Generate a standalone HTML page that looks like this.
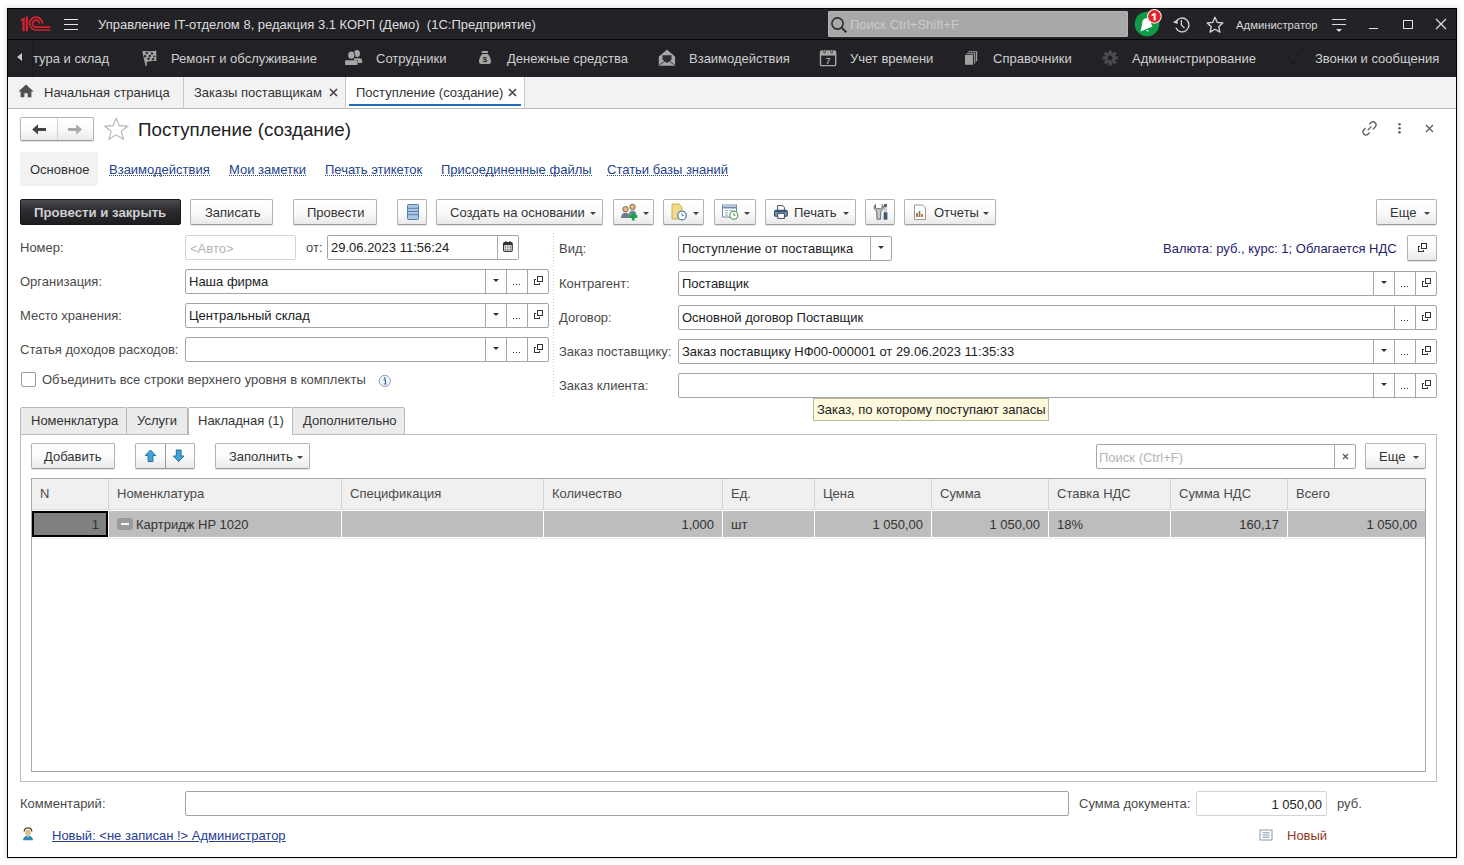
<!DOCTYPE html>
<html><head><meta charset="utf-8">
<style>
*{box-sizing:border-box;margin:0;padding:0}
html,body{width:1464px;height:865px;overflow:hidden;background:#fff}
body{position:relative;font-family:"Liberation Sans",sans-serif;font-size:13px;color:#333}
.a{position:absolute}
.t{position:absolute;white-space:nowrap;line-height:15px;height:15px}
.win{position:absolute;left:7px;top:8px;width:1450px;height:850px;border:1px solid #000;background:#fff;box-shadow:0 0 5px 1px rgba(0,0,0,.12)}
.mt{color:#cfcfcf}
.btn{position:absolute;height:26px;border:1px solid #b4b4b4;border-bottom-color:#9a9a9a;border-radius:2px;background:linear-gradient(#ffffff 0%,#fbfbfb 50%,#e9e9e9 100%);box-shadow:0 1px 1px rgba(0,0,0,.12)}
.btn .bt{position:absolute;top:5px;white-space:nowrap;line-height:15px;color:#333}
.dd{position:absolute;width:0;height:0;border-left:3px solid transparent;border-right:3px solid transparent;border-top:3px solid #444}
.inp{position:absolute;height:24px;border:1px solid #a5a5a5;border-radius:2px;background:#fff}
.inp.l{border-color:#d4d4d4}
.inp .v{position:absolute;left:4px;top:3px;white-space:nowrap;line-height:15px;color:#222}
.sep{position:absolute;top:0;bottom:0;width:1px;background:#c4c4c4}
.lbl{color:#4a4a4a}
.ib{position:absolute;top:0;width:21px;height:23px;border-left:1px solid #a5a5a5}
.ib.dr::after{content:"";position:absolute;left:7px;top:9px;border-left:3px solid transparent;border-right:3px solid transparent;border-top:3.5px solid #333}
.ib.el::after{content:"";position:absolute;left:6px;top:14px;width:1px;height:1px;background:#333;box-shadow:3px 0 #333,6px 0 #333}
.ib.op::before{content:"";position:absolute;left:6px;top:9px;width:6px;height:6px;border:1px solid #333;box-sizing:border-box}
.ib.op::after{content:"";position:absolute;left:9px;top:6px;width:6px;height:6px;border:1px solid #333;background:#fff;box-sizing:border-box;box-shadow:0 0 0 1px #fff}
.lnk{color:#24438a;border-bottom:1px dotted #34466e;line-height:15px;height:14px}
</style></head><body>
<div class="win"></div>

<!-- TITLE BAR -->
<div class="a" style="left:8px;top:9px;width:1448px;height:30px;background:#232327"></div>
<div class="a" style="left:8px;top:39px;width:1448px;height:1px;background:#060608"></div>
<svg class="a" style="left:18px;top:13px" width="36" height="22" viewBox="18 13 36 22">
 <g fill="#d6222c">
  <path d="M25.8 16.6h2.2v14.6h-2.2z"/>
  <path d="M22.4 31.2V20.5l-1.6 .9v-1.9l3.9-2.6v14.3z"/>
 </g>
 <g fill="none" stroke="#d6222c" stroke-width="1.7">
  <path d="M42.4 23.6A6.4 6.4 0 1 0 36 30H50.2"/>
  <path d="M39.5 23.6A3.5 3.5 0 1 0 36 27.1H50.2"/>
 </g>
</svg>
<div class="a" style="left:64px;top:19px;width:14px;height:1px;background:#e6e6e6;box-shadow:0 5px 0 #e6e6e6,0 10px 0 #e6e6e6"></div>
<div class="t" style="left:98px;top:17px;color:#dedede">Управление IT-отделом 8, редакция 3.1 КОРП (Демо)&nbsp;&nbsp;(1С:Предприятие)</div>

<div class="a" style="left:828px;top:11px;width:300px;height:26px;background:#a8a8a8;border-radius:2px;box-shadow:inset 0 0 0 1px #b4b4b4"></div>
<svg class="a" style="left:830px;top:16px" width="18" height="18" viewBox="0 0 18 18"><circle cx="7.5" cy="7.5" r="5.6" fill="none" stroke="#2c2c2c" stroke-width="1.6"/><path d="M11.6 11.6l4.6 4.6" stroke="#2c2c2c" stroke-width="2"/></svg>
<div class="t" style="left:850px;top:17px;color:#cbcbcb">Поиск Ctrl+Shift+F</div>

<svg class="a" style="left:1132px;top:8px" width="34" height="32" viewBox="1132 8 34 32">
 <circle cx="1147" cy="24" r="12.3" fill="#0e9a47"/>
 <path d="M1140.5 31.5 L1152.5 26.5 C1151 24 1151 21 1149.5 19.5 C1147.5 17.5 1145 18 1143.5 19.5 C1141.5 21.5 1142.5 24 1141.5 27 Z" fill="#fff"/>
 <path d="M1145.5 31 l2.5 -1.2 l0.8 1.8 z" fill="#fff"/>
 <circle cx="1154.4" cy="16.4" r="7.3" fill="#fff"/>
 <circle cx="1154.4" cy="16.4" r="6.3" fill="#e3232b"/>
 <path d="M1153.6 20.6V15.2l-2 1.1v-1.8l2.3-1.4h1.7v7.5z" fill="#fff"/>
</svg>
<svg class="a" style="left:1172px;top:14px" width="22" height="22" viewBox="1172 14 22 22">
 <path d="M1176 21.6 A6.9 6.9 0 1 1 1175.8 27.8" fill="none" stroke="#d8d8d8" stroke-width="1.3"/>
 <path d="M1172.8 22.3 l4.6-2.6 l.2 4.4z" fill="#d8d8d8"/>
 <path d="M1181.4 20v5l3.1 3.1" fill="none" stroke="#d8d8d8" stroke-width="1.2"/>
</svg>
<svg class="a" style="left:1205px;top:15px" width="20" height="20" viewBox="0 0 20 20">
 <path d="M10 2.3l2.3 5.1 5.5.6-4.1 3.7 1.2 5.4L10 14.3l-4.9 2.8 1.2-5.4L2.2 8l5.5-.6z" fill="none" stroke="#d8d8d8" stroke-width="1.3" stroke-linejoin="round"/>
</svg>
<div class="t" style="left:1236px;top:18px;font-size:11.3px;color:#d6d6d6">Администратор</div>
<svg class="a" style="left:1330px;top:17px" width="18" height="16" viewBox="1330 17 18 16">
 <path d="M1332 19.5h14M1332 24.5h14" stroke="#dcdcdc" stroke-width="1.2"/>
 <path d="M1336 29h6l-3 3z" fill="#dcdcdc"/>
</svg>
<div class="a" style="left:1369px;top:28px;width:9px;height:1px;background:#e0e0e0"></div>
<div class="a" style="left:1403px;top:20px;width:10px;height:9px;border:1px solid #e0e0e0"></div>
<svg class="a" style="left:1434px;top:17px" width="14" height="14" viewBox="0 0 14 14"><path d="M2 2l10 10M12 2L2 12" stroke="#e0e0e0" stroke-width="1.2"/></svg>

<!-- MENU BAR -->
<div class="a" style="left:8px;top:40px;width:1448px;height:37px;background:#222226"></div>
<div class="a" style="left:32px;top:40px;width:1px;height:37px;background:#1b1b1e"></div>
<div class="a" style="left:17px;top:53px;width:0;height:0;border-top:4.5px solid transparent;border-bottom:4.5px solid transparent;border-right:5.5px solid #c8c8c8"></div>
<div class="t mt" style="left:33px;top:51px">тура и склад</div>
<div class="t mt" style="left:171px;top:51px">Ремонт и обслуживание</div>
<div class="t mt" style="left:376px;top:51px">Сотрудники</div>
<div class="t mt" style="left:507px;top:51px">Денежные средства</div>
<div class="t mt" style="left:689px;top:51px">Взаимодействия</div>
<div class="t mt" style="left:850px;top:51px">Учет времени</div>
<div class="t mt" style="left:993px;top:51px">Справочники</div>
<div class="t mt" style="left:1132px;top:51px">Администрирование</div>
<div class="t mt" style="left:1315px;top:51px">Звонки и сообщения</div>
<svg class="a" style="left:0;top:40px" width="1464" height="37" viewBox="0 40 1464 37">
 <!-- flag -->
 <path d="M142.2 51.5 C145 50.5 147.5 51.5 150 51.2 C152.5 51 154.5 50.8 156.3 50.8 V61 C153.5 61.2 151 61 148.5 61.4 C147 61.6 146 62 146.8 62.5 L146.8 66 L145.6 66 Z" fill="#a4a4a4"/>
 <g fill="#2a2a2e"><circle cx="146.7" cy="53" r="1.2"/><circle cx="152" cy="53.6" r="1.2"/><circle cx="145" cy="56.3" r="1.2"/><circle cx="149.8" cy="56" r="1.2"/><circle cx="154.3" cy="56.5" r="1.1"/><circle cx="148.5" cy="58.8" r="1.2"/><circle cx="153" cy="59.3" r="1.2"/></g>
 <!-- users -->
 <g fill="#a6a6a6"><ellipse cx="357" cy="53.4" rx="3" ry="3.5"/><path d="M354 58.2h5.6c1.5 0 2.6 1 2.6 2.6V63h-8.2z"/></g>
 <g fill="#222226"><ellipse cx="351.3" cy="55.2" rx="4" ry="4.6"/><path d="M344.8 60.2h13v5.6h-13z"/></g>
 <g fill="#a6a6a6"><ellipse cx="351.3" cy="55.2" rx="3.1" ry="3.6"/><path d="M346 60.2h10.5c.8 0 1 .6 1 1.4V65h-12.4v-3.4c0-.8.3-1.4.9-1.4z"/></g>
 <!-- money bag -->
 <g fill="#a6a6a6"><rect x="481.8" y="51" width="6.2" height="2" rx=".4"/><path d="M482 54h6c1.5 2 3 4.8 3 7.6 0 1.5-.8 2.3-2 2.3h-8c-1.2 0-2-.8-2-2.3 0-2.8 1.5-5.6 3-7.6z"/></g>
 <text x="485" y="62.4" text-anchor="middle" font-family="Liberation Sans" font-weight="bold" font-size="8" fill="#2a2a2e">$</text>
 <!-- envelope -->
 <path d="M658.8 56.5 L667 49.8 L675.1 56.5 V65.8 H658.8 Z" fill="#a6a6a6"/>
 <path d="M662.5 55.2h9v4.6l-4.5 3.2-4.5-3.2z" fill="#2e2e32"/>
 <path d="M659.5 65 L667 59.5 L674.5 65" fill="none" stroke="#2e2e32" stroke-width=".9"/>
 <!-- calendar -->
 <rect x="820.5" y="51" width="15.2" height="14.6" rx="1.2" fill="none" stroke="#a6a6a6" stroke-width="1.4"/>
 <rect x="820.5" y="51" width="15.2" height="4.6" fill="#a6a6a6"/>
 <rect x="823.8" y="49.6" width="1.6" height="3.6" rx=".8" fill="#a6a6a6" stroke="#222226" stroke-width=".6"/>
 <rect x="830.8" y="49.6" width="1.6" height="3.6" rx=".8" fill="#a6a6a6" stroke="#222226" stroke-width=".6"/>
 <text x="828.2" y="64" text-anchor="middle" font-family="Liberation Sans" font-weight="bold" font-size="8.5" fill="#a6a6a6">7</text>
 <!-- copies -->
 <path d="M968.2 51.8h8.4v9.5" fill="none" stroke="#a6a6a6" stroke-width="1.1"/>
 <path d="M966.4 53.8h8.3v9.8" fill="none" stroke="#a6a6a6" stroke-width="1.1"/>
 <rect x="965" y="55" width="8" height="9.8" fill="#a0a0a0"/>
 <!-- gear -->
 <g transform="translate(1110.2 58)" fill="#4b4b4e">
  <circle r="5.2"/>
  <g id="tooth"><rect x="-1.6" y="-7.6" width="3.2" height="3.4"/></g>
  <rect x="-1.6" y="-7.6" width="3.2" height="3.4" transform="rotate(45)"/>
  <rect x="-1.6" y="-7.6" width="3.2" height="3.4" transform="rotate(90)"/>
  <rect x="-1.6" y="-7.6" width="3.2" height="3.4" transform="rotate(135)"/>
  <rect x="-1.6" y="-7.6" width="3.2" height="3.4" transform="rotate(180)"/>
  <rect x="-1.6" y="-7.6" width="3.2" height="3.4" transform="rotate(225)"/>
  <rect x="-1.6" y="-7.6" width="3.2" height="3.4" transform="rotate(270)"/>
  <rect x="-1.6" y="-7.6" width="3.2" height="3.4" transform="rotate(315)"/>
  <circle r="2.4" fill="#222226"/>
 </g>
 <!-- phone (very dark) -->
 <path d="M1287 56.5c1 3.5 3.5 6.5 7 8.5l2-1.5-2.5-2.5-1.5 1c-1.5-1-2.5-2.2-3.2-3.6l1-1.5-2.5-2.4z" fill="#1c1c1f"/>
 <path d="M1295 52.5l2.8 2.5 3.5-4" fill="none" stroke="#1c1c1f" stroke-width="1.4"/>
</svg>

<!-- OPEN TABS BAR -->
<div class="a" style="left:8px;top:77px;width:1448px;height:31px;background:#f2f2f2"></div>
<div class="a" style="left:8px;top:108px;width:1448px;height:1px;background:#bcbcbc"></div>
<div class="a" style="left:183px;top:77px;width:1px;height:31px;background:#c9c9c9"></div>
<div class="a" style="left:345px;top:77px;width:1px;height:31px;background:#c9c9c9"></div>
<div class="a" style="left:346px;top:77px;width:178px;height:31px;background:#fff"></div>
<div class="a" style="left:524px;top:77px;width:1px;height:31px;background:#c9c9c9"></div>
<div class="a" style="left:349px;top:104px;width:172px;height:2px;background:#1e6fbf"></div>
<svg class="a" style="left:18px;top:84px" width="16" height="14" viewBox="0 0 16 14"><path d="M8 .6L.4 7.4h2.2v5.8h3.8V9.2h3.2v4h3.8V7.4h2.2z" fill="#505050"/></svg>
<div class="t" style="left:44px;top:85px;color:#333">Начальная страница</div>
<div class="t" style="left:194px;top:85px;color:#333">Заказы поставщикам</div>
<svg class="a" style="left:329px;top:88px" width="9" height="9" viewBox="0 0 9 9"><path d="M1 1l7 7M8 1L1 8" stroke="#444" stroke-width="1.6"/></svg>
<div class="t" style="left:356px;top:85px;color:#333">Поступление (создание)</div>
<svg class="a" style="left:508px;top:88px" width="9" height="9" viewBox="0 0 9 9"><path d="M1 1l7 7M8 1L1 8" stroke="#444" stroke-width="1.6"/></svg>

<!-- FORM HEADER -->
<div class="btn" style="left:20px;top:117px;width:74px;height:24px"></div>
<div class="a" style="left:57px;top:118px;width:1px;height:22px;background:#d0d0d0"></div>
<svg class="a" style="left:30px;top:122px" width="56" height="16" viewBox="30 122 56 16">
 <path d="M32.2 129.4 L38 124.3 V127.9 H46 V130.9 H38 V134.5 Z" fill="#444"/>
 <path d="M82 129.4 L76.2 124.3 V127.9 H68 V130.9 H76.2 V134.5 Z" fill="#a8a8a8"/>
</svg>
<svg class="a" style="left:102px;top:116px" width="28" height="26" viewBox="102 116 28 26">
 <path d="M116.2 118.3 L119.3 125.6 L127.7 126.1 L121.3 131.3 L123.4 139.3 L116.2 134.9 L109 139.3 L111.1 131.3 L104.7 126.1 L113.1 125.6 Z" fill="none" stroke="#b4b4b4" stroke-width="1.1" stroke-linejoin="miter"/>
</svg>
<div class="t" style="left:138px;top:119px;font-size:18.8px;line-height:22px;height:22px;color:#222">Поступление (создание)</div>
<svg class="a" style="left:1358px;top:116px" width="84" height="24" viewBox="1358 116 84 24">
 <g fill="none" stroke="#555" stroke-width="1.2">
  <g transform="translate(1369.5 128.4) rotate(-45) scale(.87)" stroke-width="1.35"><path d="M3.2 -3.5H5.65A3.5 3.5 0 0 1 5.65 3.5H1.8M-2.6 -3.5H-5.65A3.5 3.5 0 0 0 -5.65 3.5H-3.2M-3 0H3"/></g>
 </g>
 <g fill="#666"><circle cx="1399.5" cy="124.3" r="1.3"/><circle cx="1399.5" cy="128.3" r="1.3"/><circle cx="1399.5" cy="132.4" r="1.3"/></g>
 <path d="M1426 125l7 7M1433 125l-7 7" stroke="#555" stroke-width="1.2"/>
</svg>

<!-- form nav -->
<div class="a" style="left:20px;top:152px;width:78px;height:34px;background:#f2f2f2;border-radius:3px"></div>
<div class="t" style="left:30px;top:162px;color:#333">Основное</div>
<div class="t lnk" style="left:109px;top:162px">Взаимодействия</div>
<div class="t lnk" style="left:229px;top:162px">Мои заметки</div>
<div class="t lnk" style="left:325px;top:162px">Печать этикеток</div>
<div class="t lnk" style="left:441px;top:162px">Присоединенные файлы</div>
<div class="t lnk" style="left:607px;top:162px">Статьи базы знаний</div>

<!-- command bar -->
<div class="a" style="left:20px;top:199px;width:161px;height:26px;border-radius:2px;background:linear-gradient(#4a4a4f,#2c2c30 45%,#1d1d20);border:1px solid #18181a"></div>
<div class="t" style="left:34px;top:205px;font-size:13.2px;font-weight:bold;color:#cfcfcf">Провести и закрыть</div>
<div class="btn" style="left:190px;top:199px;width:83px"><span class="bt" style="left:14px">Записать</span></div>
<div class="btn" style="left:293px;top:199px;width:84px"><span class="bt" style="left:13px">Провести</span></div>
<div class="btn" style="left:397px;top:199px;width:30px">
 <svg class="a" style="left:8px;top:3px" width="14" height="18" viewBox="0 0 14 18"><rect x="1.5" y="1.5" width="11" height="15" rx="1" fill="#a9c6e4" stroke="#5b7fa8" stroke-width="1"/><path d="M2 5.3h10M2 8.5h10M2 11.7h10" stroke="#5b7fa8" stroke-width="1"/></svg>
</div>
<div class="btn" style="left:436px;top:199px;width:167px"><span class="bt" style="left:13px">Создать на основании</span><i class="dd" style="left:153px;top:12px"></i></div>
<div class="btn" style="left:613px;top:199px;width:41px">
 <svg class="a" style="left:5px;top:3px" width="20" height="18" viewBox="0 0 20 18">
  <circle cx="13.5" cy="4" r="2.7" fill="#e4b985" stroke="#6a4a2a" stroke-width=".8"/><path d="M9.5 12c0-3 1.8-4.6 4-4.6s4 1.6 4 4.6z" fill="#7a8a9a"/>
  <circle cx="6.5" cy="6.2" r="2.7" fill="#e4b985" stroke="#6a4a2a" stroke-width=".8"/><path d="M2 15c0-3.5 2-5.2 4.5-5.2s4.5 1.7 4.5 5.2z" fill="#6d7c8c"/>
  <path d="M14.2 9.5v8M10.2 13.5h8" stroke="#1aa34a" stroke-width="2.8"/>
 </svg>
 <i class="dd" style="left:29px;top:12px"></i>
</div>
<div class="btn" style="left:663px;top:199px;width:41px">
 <svg class="a" style="left:6px;top:3px" width="20" height="18" viewBox="0 0 20 18">
  <path d="M2 1h7l3 3v12H2z" fill="#f3d98a" stroke="#c9a64a" stroke-width=".9"/>
  <circle cx="12" cy="12.5" r="4.3" fill="#fff" stroke="#5b7fa8" stroke-width="1.3"/><path d="M12 10.3v2.4h2" fill="none" stroke="#5b7fa8" stroke-width="1"/>
 </svg>
 <i class="dd" style="left:29px;top:12px"></i>
</div>
<div class="btn" style="left:714px;top:199px;width:42px">
 <svg class="a" style="left:6px;top:3px" width="20" height="18" viewBox="0 0 20 18">
  <rect x="1.5" y="2" width="14" height="12" fill="#fff" stroke="#6f8fb0" stroke-width="1"/><path d="M1.5 4.5h14" stroke="#6f8fb0" stroke-width="2"/>
  <path d="M4 7.5h3M8.5 7.5h3M4 10h3M4 12.2h3" stroke="#9ab" stroke-width="1"/>
  <circle cx="12.8" cy="12.2" r="4" fill="#fff" stroke="#5aa060" stroke-width="1.2"/><path d="M12.8 10v2.3h1.8" fill="none" stroke="#5aa060" stroke-width="1"/>
 </svg>
 <i class="dd" style="left:29px;top:12px"></i>
</div>
<div class="btn" style="left:765px;top:199px;width:91px">
 <svg class="a" style="left:6px;top:4px" width="18" height="18" viewBox="771 204 18 18">
  <path d="M776.6 210.5V205.6h5.2l1.6 1.7v3.2" fill="#fff" stroke="#3a4e64" stroke-width="1"/>
  <rect x="773.6" y="210.3" width="12.7" height="6" rx="1.3" fill="#7f9ab6" stroke="#2c4560" stroke-width="1.1"/>
  <path d="M774.6 211.6h10.6" stroke="#2c4560" stroke-width="1"/>
  <rect x="776.8" y="213.4" width="6.6" height="5" fill="#fff" stroke="#3a4e64" stroke-width="1"/>
 </svg>
 <span class="bt" style="left:28px">Печать</span><i class="dd" style="left:77px;top:12px"></i>
</div>
<div class="btn" style="left:865px;top:199px;width:30px">
 <svg class="a" style="left:6px;top:3px" width="18" height="18" viewBox="871 203 18 18">
  <path d="M874.5 204.6c-1.6 1.2-1.8 3.6-.6 5.1l1.8 1.2l.3 8.3h3.6l.3-8.3l1.8-1.2c1.2-1.5 1-3.9-.6-5.1v3.2l-1.4.9h-3.8l-1.4-.9z" fill="#c9c9c9" stroke="#5a5a5a" stroke-width=".9"/>
  <rect x="883.1" y="204" width="2.8" height="3.2" fill="#555"/>
  <rect x="883.5" y="207" width="2" height="5" fill="#d8dde2" stroke="#9aa" stroke-width=".5"/>
  <path d="M882.6 212.3h3.8v7.4h-3.8z" fill="#3e5a78"/>
 </svg>
</div>
<div class="btn" style="left:904px;top:199px;width:92px">
 <svg class="a" style="left:8px;top:4px" width="14" height="17" viewBox="0 0 14 17">
  <path d="M1.5 1h8l3 3v11.5h-11z" fill="#fff" stroke="#9a9a9a" stroke-width="1"/>
  <path d="M4 13V9" stroke="#d63a2a" stroke-width="1.6"/><path d="M6.5 13V7" stroke="#3aa04a" stroke-width="1.6"/><path d="M9 13V10" stroke="#d63a2a" stroke-width="1.6"/>
 </svg>
 <span class="bt" style="left:29px">Отчеты</span><i class="dd" style="left:78px;top:12px"></i>
</div>
<div class="btn" style="left:1376px;top:199px;width:61px"><span class="bt" style="left:13px">Еще</span><i class="dd" style="left:47px;top:12px"></i></div>
<!-- LEFT FIELDS -->
<div class="t lbl" style="left:20px;top:240px">Номер:</div>
<div class="inp l" style="left:185px;top:235px;width:111px;height:25px"><span class="v" style="color:#b4b4b4;top:5px">&lt;Авто&gt;</span></div>
<div class="t lbl" style="left:306px;top:240px">от:</div>
<div class="inp" style="left:327px;top:235px;width:192px;height:25px"><span class="v" style="left:3px;top:4px">29.06.2023 11:56:24</span>
 <div class="ib" style="left:169px;width:21px">
  <svg class="a" style="left:5px;top:5px" width="10" height="11" viewBox="0 0 10 11"><rect x=".6" y="1.6" width="8.6" height="8.8" rx="1.2" fill="#fff" stroke="#333" stroke-width="1.2"/><rect x=".6" y="1.6" width="8.6" height="2.6" fill="#333"/><rect x="2.2" y=".2" width="1.3" height="2" fill="#333"/><rect x="6.3" y=".2" width="1.3" height="2" fill="#333"/><g fill="#333"><circle cx="2.7" cy="6" r=".7"/><circle cx="4.9" cy="6" r=".7"/><circle cx="7.1" cy="6" r=".7"/><circle cx="2.7" cy="8.2" r=".7"/><circle cx="4.9" cy="8.2" r=".7"/><circle cx="7.1" cy="8.2" r=".7"/></g></svg>
 </div>
</div>

<div class="t lbl" style="left:20px;top:274px">Организация:</div>
<div class="inp" style="left:185px;top:269px;width:364px;height:25px"><span class="v" style="left:3px;top:4px">Наша фирма</span>
 <div class="ib dr" style="left:299px"></div><div class="ib el" style="left:320px"></div><div class="ib op" style="left:341px"></div>
</div>
<div class="t lbl" style="left:20px;top:308px">Место хранения:</div>
<div class="inp" style="left:185px;top:303px;width:364px;height:25px"><span class="v" style="left:3px;top:4px">Центральный склад</span>
 <div class="ib dr" style="left:299px"></div><div class="ib el" style="left:320px"></div><div class="ib op" style="left:341px"></div>
</div>
<div class="t lbl" style="left:20px;top:342px">Статья доходов расходов:</div>
<div class="inp" style="left:185px;top:337px;width:364px;height:25px">
 <div class="ib dr" style="left:299px"></div><div class="ib el" style="left:320px"></div><div class="ib op" style="left:341px"></div>
</div>
<div class="a" style="left:21px;top:372px;width:15px;height:15px;border:1px solid #9a9a9a;border-radius:2px;background:#fff"></div>
<div class="t lbl" style="left:42px;top:372px">Объединить все строки верхнего уровня в комплекты</div>
<svg class="a" style="left:378px;top:374px" width="14" height="14" viewBox="0 0 14 14"><circle cx="6.8" cy="6.9" r="5.6" fill="#f4f7fb" stroke="#8aa0b8" stroke-width="1"/><circle cx="6.8" cy="4.2" r=".9" fill="#3f6a9a"/><path d="M5.6 6.1h1.9v3.9h1.1M5.6 10h2" fill="none" stroke="#3f6a9a" stroke-width="1.2"/></svg>

<div class="a" style="left:553px;top:233px;width:1px;height:165px;background-image:linear-gradient(#d0d0d0 50%,transparent 50%);background-size:1px 3px"></div>

<!-- RIGHT FIELDS -->
<div class="t lbl" style="left:559px;top:241px">Вид:</div>
<div class="inp" style="left:678px;top:236px;width:214px;height:25px"><span class="v" style="left:3px;top:4px">Поступление от поставщика</span>
 <div class="ib dr" style="left:191px"></div>
</div>
<div class="t" style="left:1163px;top:241px;color:#1f236e">Валюта: руб., курс: 1; Облагается НДС</div>
<div class="btn" style="left:1407px;top:235px;width:30px;height:26px">
 <div class="a" style="left:10px;top:10px;width:6px;height:6px;border:1px solid #333"></div>
 <div class="a" style="left:13px;top:7px;width:6px;height:6px;border:1px solid #333;background:#fafafa;box-shadow:0 0 0 1px #fafafa"></div>
</div>

<div class="t lbl" style="left:559px;top:276px">Контрагент:</div>
<div class="inp" style="left:678px;top:271px;width:759px;height:25px"><span class="v" style="left:3px;top:4px">Поставщик</span>
 <div class="ib dr" style="left:694px"></div><div class="ib el" style="left:715px"></div><div class="ib op" style="left:736px"></div>
</div>
<div class="t lbl" style="left:559px;top:310px">Договор:</div>
<div class="inp" style="left:678px;top:305px;width:759px;height:25px"><span class="v" style="left:3px;top:4px">Основной договор Поставщик</span>
 <div class="ib el" style="left:715px"></div><div class="ib op" style="left:736px"></div>
</div>
<div class="t lbl" style="left:559px;top:344px">Заказ поставщику:</div>
<div class="inp" style="left:678px;top:339px;width:759px;height:25px"><span class="v" style="left:3px;top:4px">Заказ поставщику НФ00-000001 от 29.06.2023 11:35:33</span>
 <div class="ib dr" style="left:694px"></div><div class="ib el" style="left:715px"></div><div class="ib op" style="left:736px"></div>
</div>
<div class="t lbl" style="left:559px;top:378px">Заказ клиента:</div>
<div class="inp" style="left:678px;top:373px;width:759px;height:25px">
 <div class="ib dr" style="left:694px"></div><div class="ib el" style="left:715px"></div><div class="ib op" style="left:736px"></div>
</div>
<!-- TOOLTIP -->
<div class="a" style="left:813px;top:398px;width:236px;height:23px;background:#fdf9dd;border:1px solid #bcb8a0"></div>
<div class="t" style="left:817px;top:402px;color:#222">Заказ, по которому поступают запасы</div>

<!-- PAGE TABS -->
<div class="a" style="left:20px;top:434px;width:1417px;height:348px;border:1px solid #bdbdbd"></div>
<div class="a" style="left:20px;top:407px;width:107px;height:28px;background:#ebebeb;border:1px solid #b8b8b8;border-radius:2px 2px 0 0"></div>
<div class="a" style="left:126px;top:407px;width:62px;height:28px;background:#ebebeb;border:1px solid #b8b8b8;border-radius:2px 2px 0 0"></div>
<div class="a" style="left:292px;top:407px;width:113px;height:28px;background:#ebebeb;border:1px solid #b8b8b8;border-radius:2px 2px 0 0"></div>
<div class="a" style="left:188px;top:407px;width:105px;height:28px;background:#fff;border:1px solid #b8b8b8;border-bottom:none;border-radius:2px 2px 0 0"></div>
<div class="t" style="left:31px;top:413px;color:#333">Номенклатура</div>
<div class="t" style="left:137px;top:413px;color:#333">Услуги</div>
<div class="t" style="left:198px;top:413px;color:#333">Накладная (1)</div>
<div class="t" style="left:303px;top:413px;color:#333">Дополнительно</div>

<!-- table toolbar -->
<div class="btn" style="left:31px;top:443px;width:84px"><span class="bt" style="left:12px">Добавить</span></div>
<div class="btn" style="left:135px;top:443px;width:60px">
 <div class="a" style="left:29px;top:0;width:1px;height:24px;background:#9a9a9a"></div>
 <svg class="a" style="left:6px;top:4px" width="48" height="16" viewBox="0 0 48 16">
  <path d="M8.5 2 L13.8 7.6 H10.9 V13.6 H6.1 V7.6 H3.2 Z" fill="#3ba7de" stroke="#2c6a8c" stroke-width="1"/>
  <path d="M36.7 13.6 L42 8 H39.1 V2 H34.3 V8 H31.4 Z" fill="#3ba7de" stroke="#2c6a8c" stroke-width="1"/>
 </svg>
</div>
<div class="btn" style="left:215px;top:443px;width:95px"><span class="bt" style="left:13px">Заполнить</span><i class="dd" style="left:81px;top:12px"></i></div>
<div class="inp" style="left:1096px;top:444px;width:260px;height:25px"><span class="v" style="left:2px;top:5px;color:#b4b4b4">Поиск (Ctrl+F)</span>
 <div class="ib" style="left:237px"><svg class="a" style="left:6px;top:7px" width="9" height="9" viewBox="0 0 9 9"><path d="M2 2l5 5M7 2l-5 5" stroke="#555" stroke-width="1.2"/></svg></div>
</div>
<div class="btn" style="left:1365px;top:443px;width:61px"><span class="bt" style="left:13px">Еще</span><i class="dd" style="left:47px;top:12px"></i></div>

<!-- TABLE -->
<div class="a" style="left:31px;top:478px;width:1395px;height:294px;border:1px solid #a8a8a8;background:#fff"></div>
<div class="a" style="left:32px;top:479px;width:1393px;height:30px;background:#f0f0f0"></div>
<div class="a" style="left:32px;top:509px;width:1393px;height:1px;background:#dedede"></div>
<div class="a" style="left:32px;top:511px;width:1393px;height:26px;background:#bdbdbd"></div>
<div class="a" style="left:32px;top:538px;width:1393px;height:1px;background:#ececec"></div>
<div class="a" style="left:108px;top:479px;width:1px;height:30px;background:#d4d4d4"></div><div class="a" style="left:108px;top:511px;width:1px;height:26px;background:#fff"></div><div class="a" style="left:341px;top:479px;width:1px;height:30px;background:#d4d4d4"></div><div class="a" style="left:341px;top:511px;width:1px;height:26px;background:#fff"></div><div class="a" style="left:543px;top:479px;width:1px;height:30px;background:#d4d4d4"></div><div class="a" style="left:543px;top:511px;width:1px;height:26px;background:#fff"></div><div class="a" style="left:722px;top:479px;width:1px;height:30px;background:#d4d4d4"></div><div class="a" style="left:722px;top:511px;width:1px;height:26px;background:#fff"></div><div class="a" style="left:814px;top:479px;width:1px;height:30px;background:#d4d4d4"></div><div class="a" style="left:814px;top:511px;width:1px;height:26px;background:#fff"></div><div class="a" style="left:931px;top:479px;width:1px;height:30px;background:#d4d4d4"></div><div class="a" style="left:931px;top:511px;width:1px;height:26px;background:#fff"></div><div class="a" style="left:1048px;top:479px;width:1px;height:30px;background:#d4d4d4"></div><div class="a" style="left:1048px;top:511px;width:1px;height:26px;background:#fff"></div><div class="a" style="left:1170px;top:479px;width:1px;height:30px;background:#d4d4d4"></div><div class="a" style="left:1170px;top:511px;width:1px;height:26px;background:#fff"></div><div class="a" style="left:1287px;top:479px;width:1px;height:30px;background:#d4d4d4"></div><div class="a" style="left:1287px;top:511px;width:1px;height:26px;background:#fff"></div>
<div class="a" style="left:32px;top:511px;width:76px;height:26px;background:#808080;border:2px solid #000"></div>
<div class="t" style="left:40px;top:486px;color:#4a4a4a">N</div>
<div class="t" style="left:117px;top:486px;color:#4a4a4a">Номенклатура</div>
<div class="t" style="left:350px;top:486px;color:#4a4a4a">Спецификация</div>
<div class="t" style="left:552px;top:486px;color:#4a4a4a">Количество</div>
<div class="t" style="left:731px;top:486px;color:#4a4a4a">Ед.</div>
<div class="t" style="left:823px;top:486px;color:#4a4a4a">Цена</div>
<div class="t" style="left:940px;top:486px;color:#4a4a4a">Сумма</div>
<div class="t" style="left:1057px;top:486px;color:#4a4a4a">Ставка НДС</div>
<div class="t" style="left:1179px;top:486px;color:#4a4a4a">Сумма НДС</div>
<div class="t" style="left:1296px;top:486px;color:#4a4a4a">Всего</div>

<div class="t" style="left:40px;width:59px;text-align:right;top:517px;color:#333">1</div>
<div class="a" style="left:117px;top:518px;width:16px;height:12px;border-radius:3px;background:#9a9a9a"></div>
<div class="a" style="left:121px;top:523px;width:8px;height:2px;background:#f4f4f4"></div>
<div class="t" style="left:136px;top:517px;color:#333">Картридж HP 1020</div>
<div class="t" style="left:600px;width:114px;text-align:right;top:517px;color:#333">1,000</div>
<div class="t" style="left:731px;top:517px;color:#333">шт</div>
<div class="t" style="left:820px;width:103px;text-align:right;top:517px;color:#333">1 050,00</div>
<div class="t" style="left:940px;width:100px;text-align:right;top:517px;color:#333">1 050,00</div>
<div class="t" style="left:1057px;top:517px;color:#333">18%</div>
<div class="t" style="left:1180px;width:99px;text-align:right;top:517px;color:#333">160,17</div>
<div class="t" style="left:1300px;width:117px;text-align:right;top:517px;color:#333">1 050,00</div>

<!-- BOTTOM -->
<div class="t lbl" style="left:20px;top:796px">Комментарий:</div>
<div class="inp" style="left:185px;top:791px;width:884px;height:25px"></div>
<div class="t lbl" style="left:1079px;top:796px">Сумма документа:</div>
<div class="inp l" style="left:1196px;top:791px;width:131px;height:25px"><span class="v" style="left:auto;right:4px;top:5px">1 050,00</span></div>
<div class="t lbl" style="left:1337px;top:796px">руб.</div>
<svg class="a" style="left:21px;top:826px" width="14" height="16" viewBox="0 0 14 16">
 <path d="M3.2 5.6c0-2.3 1.6-3.8 3.8-3.8s3.8 1.5 3.8 3.8" fill="none" stroke="#5a4020" stroke-width="1.3"/>
 <ellipse cx="7" cy="6.6" rx="2.8" ry="3.2" fill="#d9c08a"/>
 <path d="M2 14.2c0-2.8 2-4.4 5-4.4s5 1.6 5 4.4z" fill="#2f8cb0"/>
 <path d="M6.3 9.9h1.4l-.7 2.4z" fill="#e8f4fa"/>
</svg>
<div class="t" style="left:52px;top:828px;color:#26408f;text-decoration:underline">Новый: &lt;не записан !&gt; Администратор</div>
<svg class="a" style="left:1259px;top:829px" width="14" height="12" viewBox="0 0 14 12"><rect x="1" y="1" width="12" height="10" fill="#fff" stroke="#8a9aaa" stroke-width="1"/><path d="M3.5 3.8h7M3.5 6h7M3.5 8.2h7" stroke="#8a9aaa" stroke-width="1"/></svg>
<div class="t" style="left:1287px;top:828px;color:#8f3a22">Новый</div>

</body></html>
